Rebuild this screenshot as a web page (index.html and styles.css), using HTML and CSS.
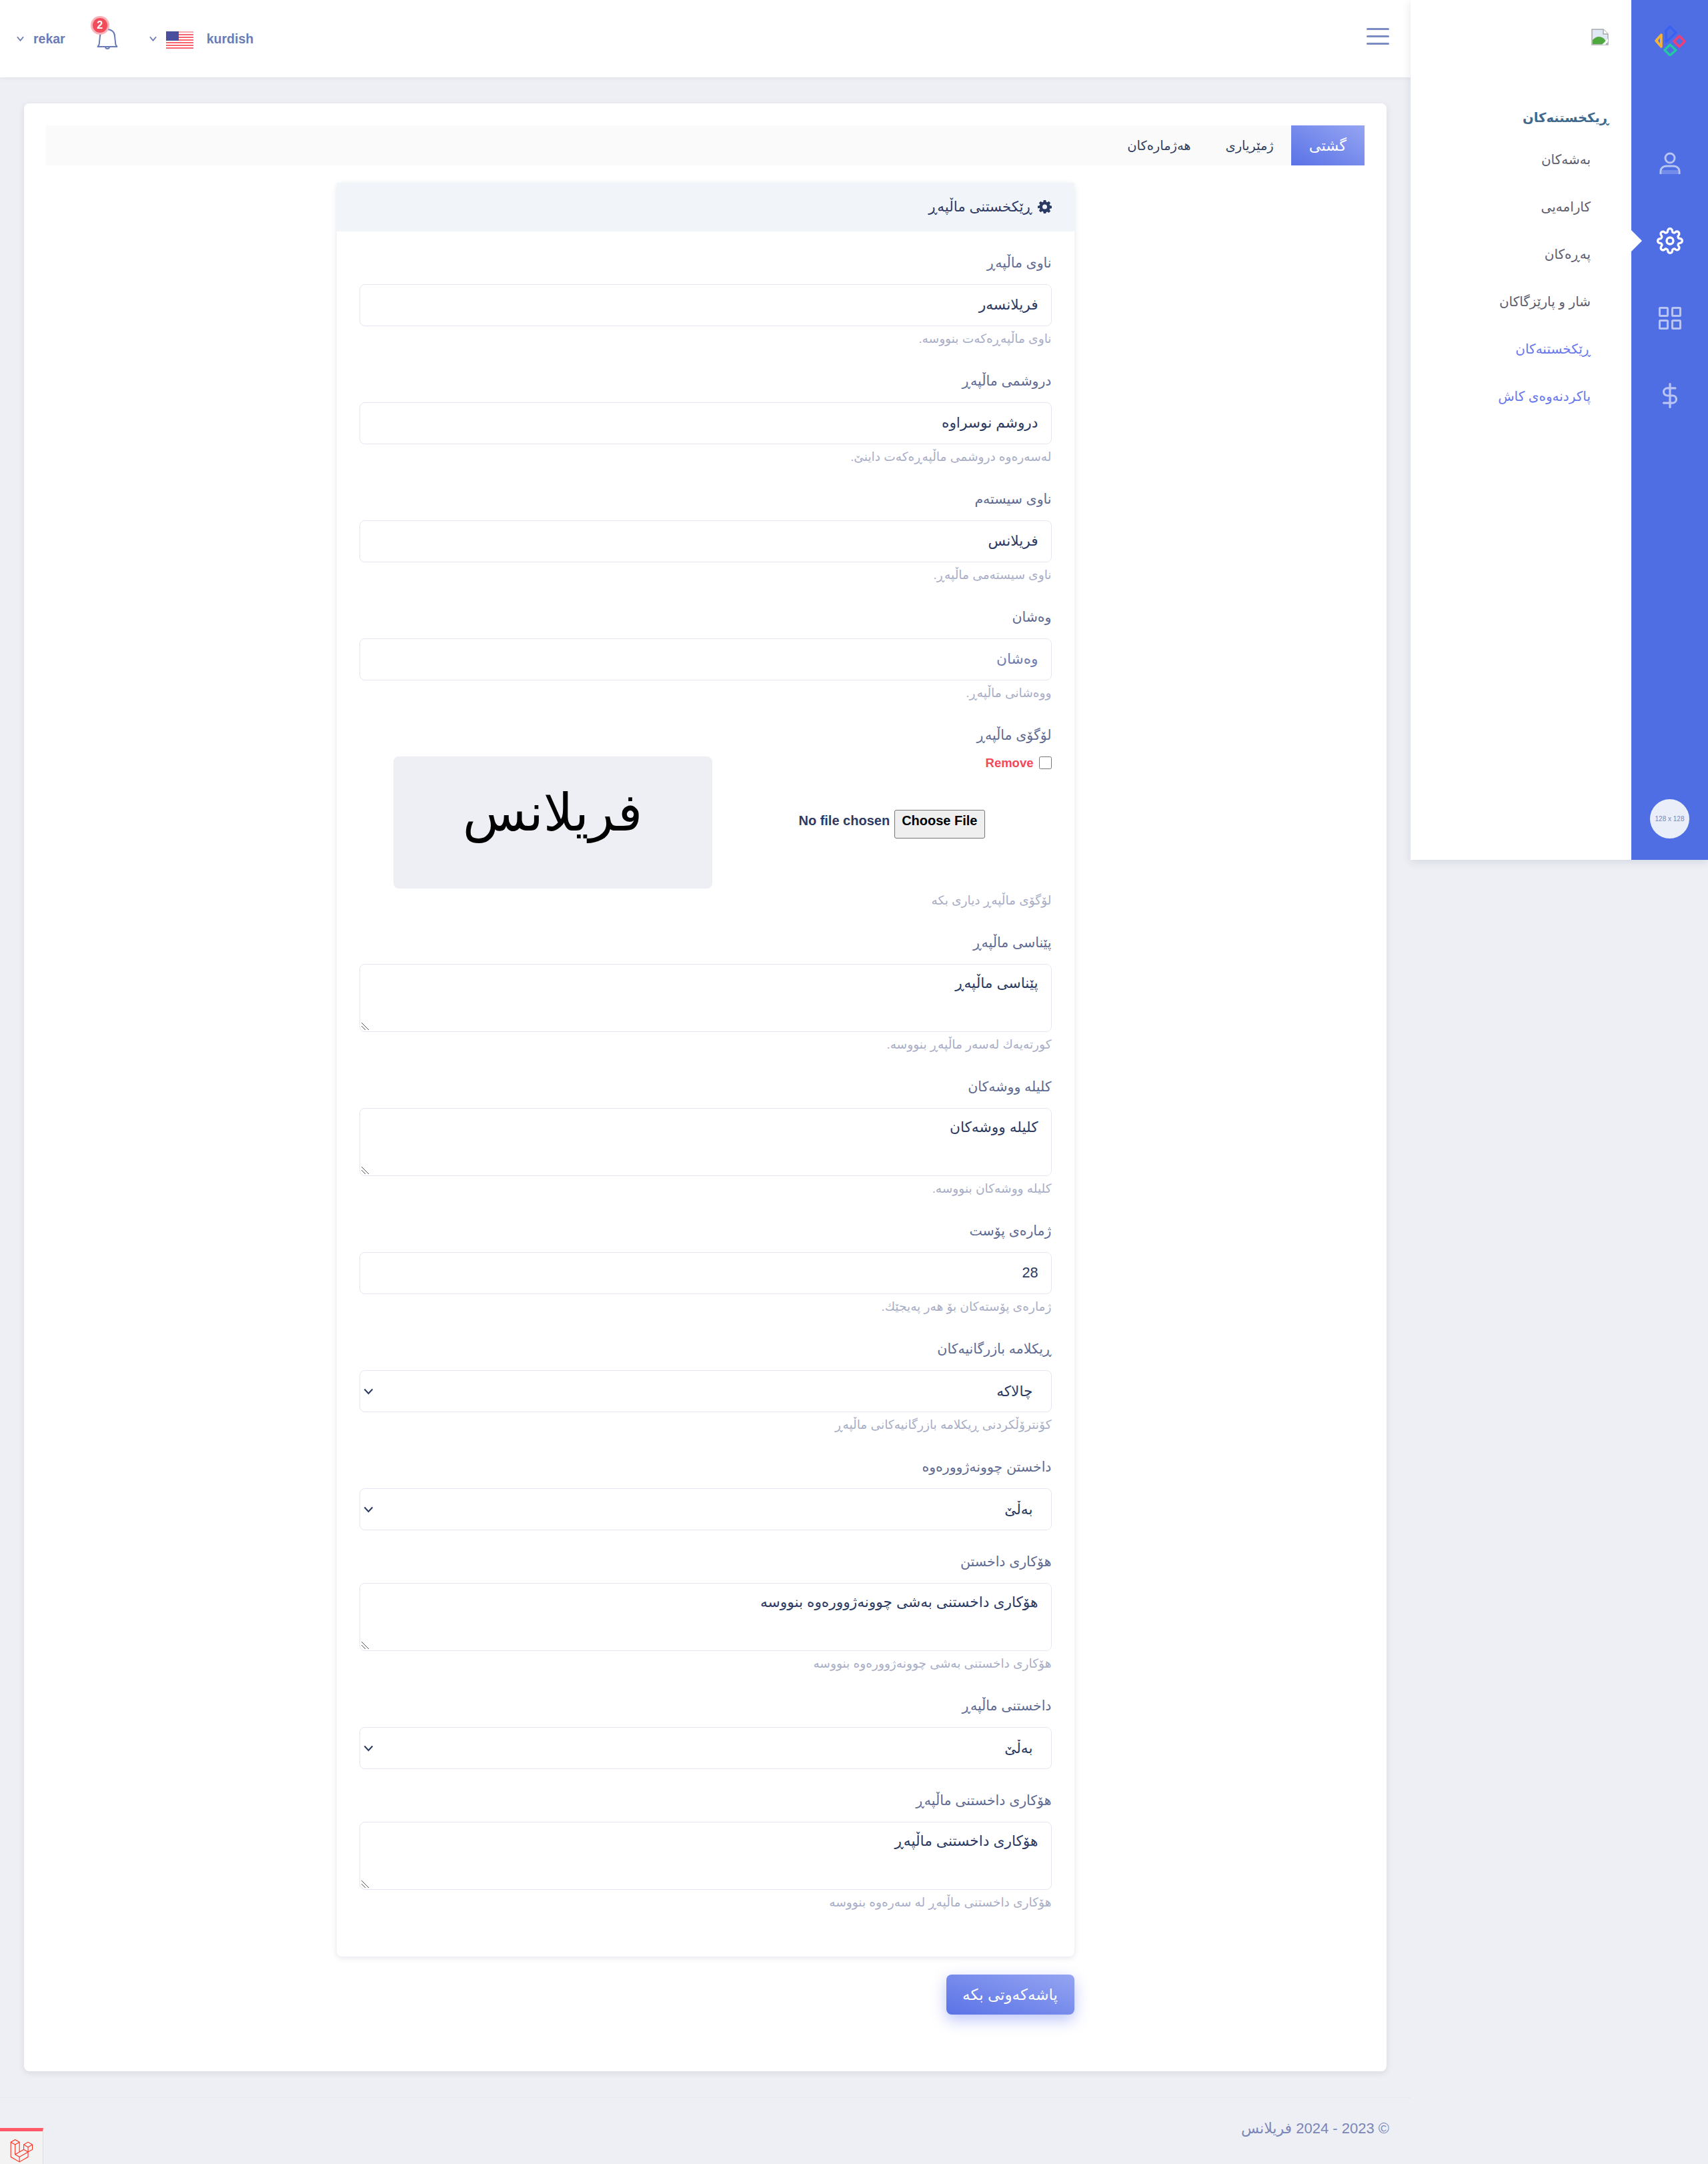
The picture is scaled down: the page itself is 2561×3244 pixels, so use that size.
FILE: index.html
```html
<!DOCTYPE html>
<html lang="ckb">
<head>
    <meta charset="utf-8">
    <meta name="viewport" content="width=device-width, initial-scale=1.0">
    <title>ڕێکخستنەکان</title>
    <link rel="stylesheet" href="styles.css">
</head>
<body>
<div class="app">
    <div class="main">
        <header class="topbar">
            <div class="top-left">
                <svg class="chev" viewBox="0 0 12 8"><polyline points="1,1 6,7 11,1"/></svg>
                <a class="top-link user-link" href="#">rekar</a>
                <div class="bell">
                    <svg viewBox="0 0 32 31"><path d="M1 27 C3 26 4 24 4 20 L5 11 C5 5 10 1 16 1 C22 1 27 5 27 11 L28 20 C28 24 29 26 31 27 Z"/><path d="M13 27 a3 3 0 0 0 6 0"/></svg>
                    <span class="badge">2</span>
                </div>
                <svg class="chev" viewBox="0 0 12 8"><polyline points="1,1 6,7 11,1"/></svg>
                <svg class="flag" viewBox="0 0 41 26">
                    <rect width="41" height="26" fill="#fff"/>
                    <rect width="41" height="2" fill="#f7a8ae"/>
                    <rect y="4" width="41" height="2" fill="#f7636f"/>
                    <rect y="8" width="41" height="2" fill="#f7636f"/>
                    <rect y="12" width="41" height="2" fill="#f7636f"/>
                    <rect y="16" width="41" height="2" fill="#f7636f"/>
                    <rect y="20" width="41" height="2" fill="#f7636f"/>
                    <rect y="24" width="41" height="2" fill="#f7636f"/>
                    <rect width="19" height="14" fill="#4a4f9e"/>
                </svg>
                <a class="top-link" href="#">kurdish</a>
            </div>
            <button class="burger" type="button"><span></span><span></span><span></span></button>
        </header>

        <main class="content">
            <div class="panel" dir="rtl">
                <nav class="tabs">
                    <a class="tab active" href="#">گشتی</a>
                    <a class="tab" href="#">ژمێریاری</a>
                    <a class="tab" href="#">هەژمارەکان</a>
                </nav>

                <form class="settings">
                    <div class="settings-card">
                        <h3 class="card-title">
                            <svg class="cog" viewBox="0 0 24 24"><path fill-rule="evenodd" d="M10 1h4l.6 3.2 1.7.7L19 3.1 21.9 6l-1.8 2.7.7 1.7L24 11v4l-3.2.6-.7 1.7 1.8 2.7-2.9 2.9-2.7-1.8-1.7.7L14 24h-4l-.6-3.2-1.7-.7L5 21.9 2.1 19l1.8-2.7-.7-1.7L0 15v-4l3.2-.6.7-1.7L2.100 6 5 3.100l2.700 1.800 1.700-.7zM12 8.500a4 4 0 1 0 0 8 4 4 0 0 0 0-8z"/></svg>
                            ڕێکخستنی ماڵپەڕ
                        </h3>
                        <div class="card-body">
                            <div class="field">
                                <label>ناوی ماڵپەڕ</label>
                                <input class="control" type="text" value="فریلانسەر">
                                <small>ناوی ماڵپەڕەکەت بنووسە.</small>
                            </div>
                            <div class="field">
                                <label>دروشمی ماڵپەڕ</label>
                                <input class="control" type="text" value="دروشم نوسراوە">
                                <small>لەسەرەوە دروشمی ماڵپەڕەکەت داینێ.</small>
                            </div>
                            <div class="field">
                                <label>ناوی سیستەم</label>
                                <input class="control" type="text" value="فریلانس">
                                <small>ناوی سیستەمی ماڵپەڕ.</small>
                            </div>
                            <div class="field">
                                <label>وەشان</label>
                                <input class="control" type="text" placeholder="وەشان">
                                <small>ووەشانی ماڵپەڕ.</small>
                            </div>
                            <div class="field logo-field">
                                <label>لۆگۆی ماڵپەڕ</label>
                                <div class="logo-row">
                                    <div class="logo-controls">
                                        <div class="remove-row">
                                            <input class="remove-check" type="checkbox">
                                            <span class="remove-text">Remove</span>
                                        </div>
                                        <input class="file-input" type="file">
                                    </div>
                                    <div class="logo-preview">فریلانس</div>
                                </div>
                                <small>لۆگۆی ماڵپەڕ دیاری بکە</small>
                            </div>
                            <div class="field">
                                <label>پێناسی ماڵپەڕ</label>
                                <textarea class="control area">پێناسی ماڵپەڕ</textarea>
                                <small>کورتەیەك لەسەر ماڵپەڕ بنووسە.</small>
                            </div>
                            <div class="field">
                                <label>کلیلە ووشەکان</label>
                                <textarea class="control area">کلیلە ووشەکان</textarea>
                                <small>کلیلە ووشەکان بنووسە.</small>
                            </div>
                            <div class="field">
                                <label>ژمارەی پۆست</label>
                                <input class="control" type="text" value="28">
                                <small>ژمارەی پۆستەکان بۆ هەر پەیجێك.</small>
                            </div>
                            <div class="field">
                                <label>ڕیکلامە بازرگانیەکان</label>
                                <select class="control pick"><option>چالاکە</option></select>
                                <small>کۆنترۆڵکردنی ڕیکلامە بازرگانیەکانی ماڵپەڕ</small>
                            </div>
                            <div class="field no-help">
                                <label>داخستن چوونەژوورەوە</label>
                                <select class="control pick"><option>بەڵێ</option></select>
                            </div>
                            <div class="field">
                                <label>هۆکاری داخستن</label>
                                <textarea class="control area">هۆکاری داخستنی بەشی چوونەژوورەوە بنووسە</textarea>
                                <small>هۆکاری داخستنی بەشی چوونەژوورەوە بنووسە</small>
                            </div>
                            <div class="field no-help">
                                <label>داخستنی ماڵپەڕ</label>
                                <select class="control pick"><option>بەڵێ</option></select>
                            </div>
                            <div class="field">
                                <label>هۆکاری داخستنی ماڵپەڕ</label>
                                <textarea class="control area">هۆکاری داخستنی ماڵپەڕ</textarea>
                                <small>هۆکاری داخستنی ماڵپەڕ لە سەرەوە بنووسە</small>
                            </div>
                        </div>
                    </div>
                    <div class="form-actions">
                        <button class="save-btn" type="button">پاشەکەوتی بکە</button>
                    </div>
                </form>
            </div>
        </main>

        <footer class="page-footer" dir="rtl">
            <p>© 2023 - 2024 فریلانس</p>
        </footer>
    </div>

    <aside class="sidebar">
        <div class="subnav" dir="rtl">
            <div class="subnav-logo">
                <svg class="broken-img" viewBox="0 0 26 25">
                    <path d="M1 1H18L25 8V24H1Z" fill="#dfe8f4" stroke="#a9a9a9" stroke-width="1.500"/>
                    <path d="M18 1V8H25" fill="#fff" stroke="#a9a9a9" stroke-width="1.500"/>
                    <path d="M2 23V17C8 10 15 11 20 16L24 23Z" fill="#4fa83d"/>
                    <path d="M16 24L25 15V19L21 24Z" fill="#fff"/>
                </svg>
            </div>
            <h4 class="subnav-title">ڕیکخستنەکان</h4>
            <ul class="subnav-list">
                <li><a href="#">بەشەکان</a></li>
                <li><a href="#">کارامەیی</a></li>
                <li><a href="#">پەڕەکان</a></li>
                <li><a href="#">شار و پارێزگاکان</a></li>
                <li><a class="current" href="#">ڕێکخستنەکان</a></li>
                <li><a class="current" href="#">پاکردنەوەی کاش</a></li>
            </ul>
        </div>
        <div class="rail">
            <svg class="rail-logo" viewBox="0 0 46 46" fill="none" stroke-width="3.500" stroke-linejoin="round">
                <polygon points="10,14 2,23 10,32" stroke="#f5b335" fill="#f5b335"/>
                <polygon points="8,19 5,23 8,27" fill="#4f6ee3" stroke="none"/>
                <polygon points="17,8 23,2 32,11 17,25" stroke="#3a62f2"/>
                <polygon points="37,16 45,24 37,32 29,24" stroke="#ef3f78"/>
                <polygon points="23,29 32,37 23,45 15,37" stroke="#22c7a4"/>
            </svg>
            <a class="rail-item" href="#">
                <svg class="dim" width="32" height="34" viewBox="0 0 32 34" fill="none" stroke="#fff" stroke-width="3"><circle cx="16" cy="9" r="7"/><path d="M2 33V29C2 24 6 21 10 21H22C26 21 30 24 30 29V33"/><path d="M4 27H28V33H4Z" fill="#fff" fill-opacity=".35" stroke="none"/></svg>
            </a>
            <a class="rail-item active" href="#">
                <svg width="42" height="40" viewBox="0 0 24 24" fill="none" stroke="#fff" stroke-width="2" stroke-linecap="round" stroke-linejoin="round"><circle cx="12" cy="12" r="3"/><path d="M19.4 15a1.65 1.65 0 0 0 .33 1.82l.06.06a2 2 0 0 1 0 2.83 2 2 0 0 1-2.83 0l-.06-.06a1.65 1.65 0 0 0-1.82-.33 1.65 1.65 0 0 0-1 1.51V21a2 2 0 0 1-2 2 2 2 0 0 1-2-2v-.09A1.65 1.65 0 0 0 9 19.4a1.65 1.65 0 0 0-1.82.33l-.06.06a2 2 0 0 1-2.83 0 2 2 0 0 1 0-2.83l.06-.06a1.65 1.65 0 0 0 .33-1.82 1.65 1.65 0 0 0-1.51-1H3a2 2 0 0 1-2-2 2 2 0 0 1 2-2h.09A1.65 1.65 0 0 0 4.6 9a1.65 1.65 0 0 0-.33-1.82l-.06-.06a2 2 0 0 1 0-2.83 2 2 0 0 1 2.83 0l.06.06a1.65 1.65 0 0 0 1.82.33H9a1.65 1.65 0 0 0 1-1.51V3a2 2 0 0 1 2-2 2 2 0 0 1 2 2v.09a1.65 1.65 0 0 0 1 1.51 1.65 1.65 0 0 0 1.82-.33l.06-.06a2 2 0 0 1 2.83 0 2 2 0 0 1 0 2.83l-.06.06a1.65 1.65 0 0 0-.33 1.82V9a1.65 1.65 0 0 0 1.51 1H21a2 2 0 0 1 2 2 2 2 0 0 1-2 2h-.09a1.65 1.65 0 0 0-1.51 1z"/></svg>
            </a>
            <a class="rail-item" href="#">
                <svg class="dim" width="34" height="34" viewBox="0 0 34 34" fill="none" stroke="#fff" stroke-width="3"><rect x="1.500" y="1.500" width="12" height="12" rx="1"/><rect x="20.500" y="1.500" width="12" height="12" rx="1"/><rect x="1.500" y="20.500" width="12" height="12" rx="1"/><rect x="20.500" y="20.500" width="12" height="12" rx="1"/></svg>
            </a>
            <a class="rail-item" href="#">
                <svg class="dim" width="40" height="38" viewBox="0 0 24 24" fill="none" stroke="#fff" stroke-width="2" stroke-linecap="round" stroke-linejoin="round"><line x1="12" y1="1" x2="12" y2="23"/><path d="M17 5H9.500a3.500 3.500 0 0 0 0 7h5a3.500 3.500 0 0 1 0 7H6"/></svg>
            </a>
            <div class="avatar">128 x 128</div>
        </div>
    </aside>
</div>

<div class="debug-bar">
    <svg viewBox="0 0 50 52"><path fill="#ff2d20" d="M49.626 11.564a.809.809 0 0 1 .028.209v10.972a.8.8 0 0 1-.402.694l-9.209 5.302V39.25c0 .286-.152.55-.4.694L20.42 51.01c-.044.025-.092.041-.14.058-.018.006-.035.017-.054.022a.805.805 0 0 1-.41 0c-.022-.006-.042-.018-.063-.026-.044-.016-.09-.03-.132-.054L.402 39.944A.801.801 0 0 1 0 39.25V6.334c0-.072.01-.142.028-.21.006-.023.02-.044.028-.067.015-.042.029-.085.051-.124.015-.026.037-.047.055-.071.023-.032.044-.065.071-.093.023-.023.053-.04.079-.06.029-.024.055-.05.088-.069h.001l9.61-5.533a.802.802 0 0 1 .8 0l9.61 5.533h.002c.032.02.059.045.088.068.026.02.055.038.078.06.028.029.048.062.072.094.017.024.04.045.054.071.023.04.036.082.052.124.008.023.022.044.028.068a.809.809 0 0 1 .028.209v20.559l8.008-4.611v-10.51c0-.07.01-.141.028-.208.007-.024.02-.045.028-.068.016-.042.03-.085.052-.124.015-.026.037-.047.054-.071.024-.032.044-.065.072-.093.023-.023.052-.04.078-.06.03-.024.056-.05.088-.069h.001l9.611-5.533a.801.801 0 0 1 .8 0l9.61 5.533c.034.02.06.045.09.068.025.02.054.038.077.06.028.029.048.062.072.094.018.024.04.045.054.071.023.039.036.082.052.124.009.023.022.044.028.068zm-1.574 10.718v-9.124l-3.363 1.936-4.646 2.675v9.124l8.01-4.611zm-9.61 16.505v-9.13l-4.57 2.61-13.05 7.448v9.216l17.62-10.144zM1.602 7.719v31.068L19.22 48.93v-9.214l-9.204-5.209-.003-.002-.004-.002c-.031-.018-.057-.044-.086-.066-.025-.02-.054-.036-.076-.058l-.002-.003c-.026-.025-.044-.056-.066-.084-.02-.027-.044-.05-.06-.078l-.001-.003c-.018-.03-.029-.066-.042-.1-.013-.03-.03-.058-.038-.09v-.001c-.01-.038-.012-.078-.016-.117-.004-.03-.012-.06-.012-.09v-.002-21.481L4.965 9.654 1.602 7.72zm8.81-5.994L2.405 6.334l8.005 4.609 8.006-4.61-8.006-4.608zm4.164 28.764l4.645-2.674V7.719l-3.363 1.936-4.646 2.675v20.096l3.364-1.937zM39.243 7.164l-8.006 4.609 8.006 4.609 8.005-4.61-8.005-4.608zm-.801 10.605l-4.646-2.675-3.363-1.936v9.124l4.645 2.674 3.364 1.937v-9.124zM20.02 38.33l11.743-6.704 5.87-3.35-8-4.606-9.211 5.303-8.395 4.833 7.993 4.524z"/></svg>
</div>
</body>
</html>
```

FILE: styles.css
```css
body {
    font-family: "Liberation Sans", "DejaVu Sans", sans-serif;
    margin: 0;
    padding: 0;
    background-color: #eeeff4;
    color: #2f3a64;
}

a {
    text-decoration: none;
}

.app {
    display: flex;
    align-items: flex-start;
    min-height: 3244px;
}

.main {
    width: 2115px;
    flex-shrink: 0;
}

/* top bar */
.topbar {
    display: flex;
    justify-content: space-between;
    align-items: center;
    height: 116px;
    padding: 0 32px 0 25px;
    box-sizing: border-box;
    background-color: #fff;
    box-shadow: 0 1px 6px rgba(60, 70, 110, 0.08);
}

.top-left {
    display: flex;
    align-items: center;
}

.chev {
    width: 11px;
    height: 8px;
    fill: none;
    stroke: #6b7bb5;
    stroke-width: 2;
    margin-right: 14px;
}

.top-link {
    color: #6b7bb5;
    font-size: 19.5px;
    font-weight: 700;
}

.user-link {
    margin-right: 47px;
}

.bell {
    position: relative;
    width: 32px;
    height: 31px;
    margin: 0 47px 0 0;
}

.bell svg {
    display: block;
    width: 32px;
    height: 31px;
    fill: none;
    stroke: #6b7bb5;
    stroke-width: 2;
}

.badge {
    position: absolute;
    left: -6px;
    top: -16px;
    width: 22px;
    height: 22px;
    line-height: 22px;
    border-radius: 50%;
    text-align: center;
    font-size: 16px;
    font-weight: 700;
    color: #fff;
    background-color: #f24c5a;
    box-shadow: 0 0 0 3px #f7b3b8;
}

.flag {
    width: 41px;
    height: 26px;
    margin: 3px 20px 0 0;
}

.burger {
    display: flex;
    flex-direction: column;
    gap: 8px;
    width: 34px;
    padding: 0;
    margin-bottom: 8px;
    border: none;
    background: none;
}

.burger span {
    display: block;
    height: 3px;
    border-radius: 2px;
    background-color: #7a8cc0;
}

/* content */
.content {
    padding: 39px 36px 0;
}

.panel {
    padding: 33px 33px 85px;
    background-color: #fff;
    border-radius: 8px;
    box-shadow: 0 3px 10px rgba(60, 70, 110, 0.12);
}

.tabs {
    display: flex;
    height: 60px;
    margin-bottom: 26px;
    background-color: #fafafa;
}

.tab {
    display: flex;
    align-items: center;
    padding: 0 26px;
    color: #33405f;
    font-size: 19.4px;
}

.tab.active {
    padding: 0 27px;
    color: #fff;
    font-size: 22.5px;
    background-image: linear-gradient(to top right, #5a72e6, #95a5f2);
}

.settings {
    width: 1106px;
    margin: 0 auto;
}

.settings-card {
    background-color: #fff;
    border-radius: 8px;
    box-shadow: 0 2px 8px rgba(60, 70, 110, 0.14);
}

.card-title {
    display: flex;
    align-items: center;
    gap: 8px;
    height: 73px;
    margin: 0;
    padding: 0 34px 2px;
    box-sizing: border-box;
    color: #2f3a64;
    font-size: 21.3px;
    font-weight: 400;
    background-color: #f1f4f9;
}

.cog {
    width: 21px;
    height: 21px;
    fill: #2b3a63;
}

.card-body {
    padding: 35px 34px 30px;
}

/* form fields */
.field {
    margin-bottom: 38px;
}

.field.no-help {
    margin-bottom: 35px;
}

.field label {
    display: block;
    height: 24px;
    line-height: 24px;
    margin-bottom: 20px;
    color: #5e6a92;
    font-size: 20.5px;
}

.field small {
    display: block;
    height: 26px;
    line-height: 26px;
    margin-top: 6px;
    color: #a8adc6;
    font-size: 18.6px;
}

.logo-field small {
    margin-top: 5px;
}

.control {
    display: block;
    box-sizing: border-box;
    width: 100%;
    height: 63px;
    padding: 0 19px 2px;
    border: 1px solid #e4e7f1;
    border-radius: 8px;
    background-color: #fff;
    color: #2b3a63;
    font-family: inherit;
    font-size: 21.7px;
    outline: none;
}

.control::placeholder {
    color: #6f7db0;
    opacity: 1;
}

.area {
    height: 102px;
    padding-top: 13px;
    line-height: 30px;
    resize: none;
    background-image: url("data:image/svg+xml,%3Csvg xmlns='http://www.w3.org/2000/svg' width='14' height='13'%3E%3Cpath d='M1 1L12 12M1 6L7 12' stroke='%23555' fill='none'/%3E%3C/svg%3E");
    background-repeat: no-repeat;
    background-position: left 1px bottom 1px;
}

.pick {
    padding: 0 27px 0 0;
    appearance: none;
    background-image: url("data:image/svg+xml,%3Csvg xmlns='http://www.w3.org/2000/svg' width='15' height='10'%3E%3Cpolyline points='1.5,1.500 7.500,8 13.500,1.500' stroke='%232b3a63' stroke-width='2' fill='none'/%3E%3C/svg%3E");
    background-repeat: no-repeat;
    background-position: left 5px center;
}

/* logo upload */
.logo-row {
    display: flex;
    height: 198px;
}

.logo-controls {
    flex: 1;
}

.remove-row {
    display: flex;
    align-items: center;
    gap: 8px;
    height: 19px;
}

.remove-check {
    width: 19px;
    height: 19px;
    margin: 0;
}

.remove-text {
    color: #f1495a;
    font-size: 18.5px;
    font-weight: 700;
}

.file-input {
    display: block;
    width: 300px;
    margin: 61px 100px 0 0;
    color: #2f3a64;
    font-family: inherit;
    font-size: 20px;
    font-weight: 700;
}

.file-input::file-selector-button {
    height: 43px;
    margin-inline-end: 7px;
    padding: 0 10px 10px;
    border: 1px solid #767676;
    border-radius: 3px;
    background-color: #efefef;
    color: #000;
    font-family: inherit;
    font-size: 20px;
    font-weight: 700;
}

.logo-preview {
    display: flex;
    align-items: center;
    justify-content: center;
    width: 478px;
    height: 198px;
    margin-left: 51px;
    padding-bottom: 30px;
    box-sizing: border-box;
    border-radius: 8px;
    background-color: #eeeff4;
    color: #000;
    font-size: 78px;
}

.form-actions {
    display: flex;
    margin-top: 27px;
}

.save-btn {
    width: 192px;
    height: 60px;
    border: none;
    border-radius: 8px;
    color: #fff;
    font-family: inherit;
    font-size: 23px;
    background-image: linear-gradient(to top right, #5a72e6, #95a5f2);
    box-shadow: 0 8px 22px rgba(90, 110, 240, 0.4);
}

/* footer */
.page-footer {
    margin-top: 39px;
    height: 99px;
    padding: 0 32px;
    border-top: 1px solid #e8e9ef;
}

.page-footer p {
    margin: 33px 0 0;
    color: #7a86b8;
    font-size: 22px;
}

/* sidebar */
.sidebar {
    display: flex;
    width: 446px;
    height: 1289px;
    box-shadow: 0 3px 12px rgba(60, 70, 110, 0.14);
}

.subnav {
    width: 331px;
    box-sizing: border-box;
    padding: 43px 34px 0 0;
    background-color: #fff;
}

.subnav-logo {
    height: 25px;
}

.broken-img {
    display: block;
    width: 26px;
    height: 25px;
}

.subnav-title {
    margin: 92px 0 0;
    color: #3f6a8f;
    font-size: 19.5px;
    font-weight: 700;
    line-height: 32px;
}

.subnav-list {
    list-style: none;
    margin: 12px 0 0;
    padding: 0 27px 0 0;
}

.subnav-list li {
    height: 71px;
    line-height: 71px;
}

.subnav-list a {
    color: #5e5e6e;
    font-size: 20px;
}

.subnav-list a.current {
    color: #6a78ee;
}

.rail {
    display: flex;
    flex-direction: column;
    align-items: center;
    width: 115px;
    background-color: #4f6ee3;
}

.rail-logo {
    width: 46px;
    height: 46px;
    margin: 38px 0 103px;
}

.rail-item {
    position: relative;
    display: flex;
    align-items: center;
    justify-content: center;
    width: 100%;
    height: 116px;
}

.rail-item .dim {
    opacity: 0.6;
}

.rail-item.active::before {
    content: "";
    position: absolute;
    left: 0;
    top: 42px;
    border-top: 16px solid transparent;
    border-bottom: 16px solid transparent;
    border-left: 16px solid #fff;
}

.avatar {
    width: 59px;
    height: 59px;
    line-height: 59px;
    margin-top: auto;
    margin-bottom: 32px;
    border-radius: 50%;
    text-align: center;
    color: #7a86b8;
    font-size: 10px;
    background-color: #e9eef8;
}

/* debug toolbar tab */
.debug-bar {
    position: fixed;
    left: 0;
    bottom: 0;
    width: 65px;
    height: 54px;
    box-sizing: border-box;
    padding: 12px 0 0 15px;
    border-top: 5px solid #ff5a65;
    border-right: 1px solid #ddd;
    background-color: #f3f3f3;
}

.debug-bar svg {
    display: block;
    width: 35px;
    height: 35px;
}
```
